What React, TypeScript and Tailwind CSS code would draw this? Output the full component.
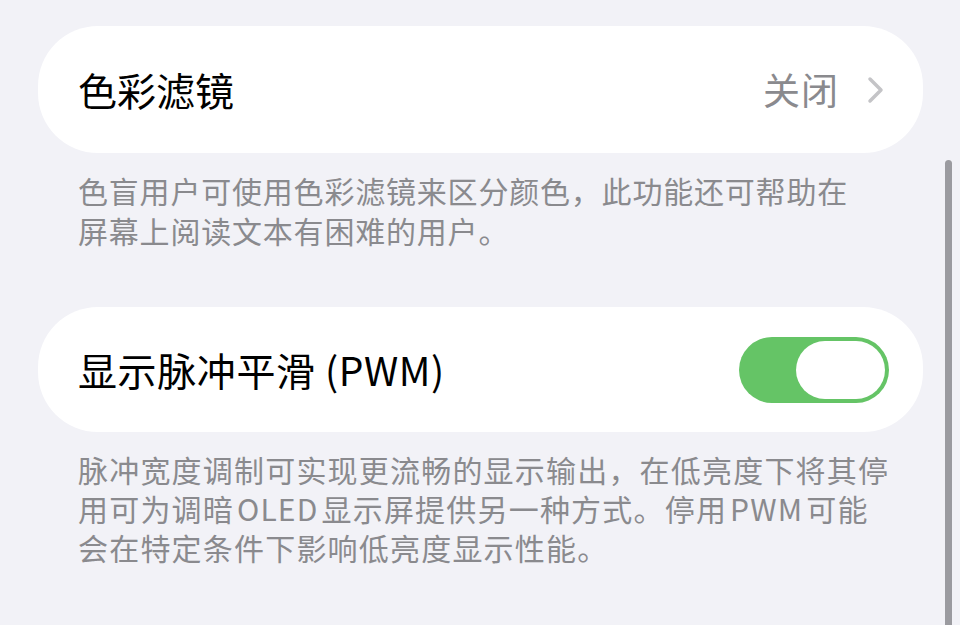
import React from "react";

const font = { fontFamily: '"Noto Sans CJK SC", "Noto Sans", sans-serif' };

export default function App() {
  return (
    <div className="relative w-[960px] h-[625px] overflow-hidden bg-[#f2f2f7]" style={font}>
      <div className="pl-[38px] pt-[26px] w-[923px]">
        {/* COLOR FILTER */}
        <div className="h-[127px] bg-white rounded-[60px] flex items-center justify-between pl-[40px] pr-[38px]">
          <span className="text-[39px] text-black">色彩滤镜</span>
          <div className="flex items-center gap-[28px]">
            <span className="text-[37px] tracking-[1px] text-[#8a8a8e]">关闭</span>
            <svg width="18" height="28" viewBox="0 0 18 28" fill="none">
              <path d="M3 3 L14 14 L3 25" stroke="#c4c4c7" strokeWidth="3.5" strokeLinecap="round" strokeLinejoin="round" />
            </svg>
          </div>
        </div>
        <p className="mt-[17px] pl-[40px] text-[30px] leading-[40px] text-[#8a8a8e] tracking-[0.8px] whitespace-nowrap">
          色盲用户可使用色彩滤镜来区分颜色，此功能还可帮助在<br />
          屏幕上阅读文本有困难的用户。
        </p>

        {/* PWM */}
        <div className="mt-[57px] h-[125px] bg-white rounded-[60px] flex items-center justify-between pl-[40px] pr-[34px]">
          <span className="text-[39px] tracking-[0.6px] text-black">显示脉冲平滑 (PWM)</span>
          <div className="w-[150px] h-[66px] rounded-full bg-[#65c466] flex items-center justify-end p-[4px]">
            <div className="w-[89px] h-[58px] rounded-full bg-white" />
          </div>
        </div>
        <p className="mt-[18px] pl-[40px] text-[30px] leading-[39px] text-[#8a8a8e] tracking-[1.2px] [word-spacing:-5px] whitespace-nowrap">
          脉冲宽度调制可实现更流畅的显示输出，在低亮度下将其停<br />
          用可为调暗 OLED 显示屏提供另一种方式。停用 PWM 可能<br />
          会在特定条件下影响低亮度显示性能。
        </p>
      </div>

      {/* scrollbar */}
      <div className="absolute left-[945px] top-[160px] w-[7px] h-[480px] rounded-full bg-[#9b9ba0]" />
    </div>
  );
}
